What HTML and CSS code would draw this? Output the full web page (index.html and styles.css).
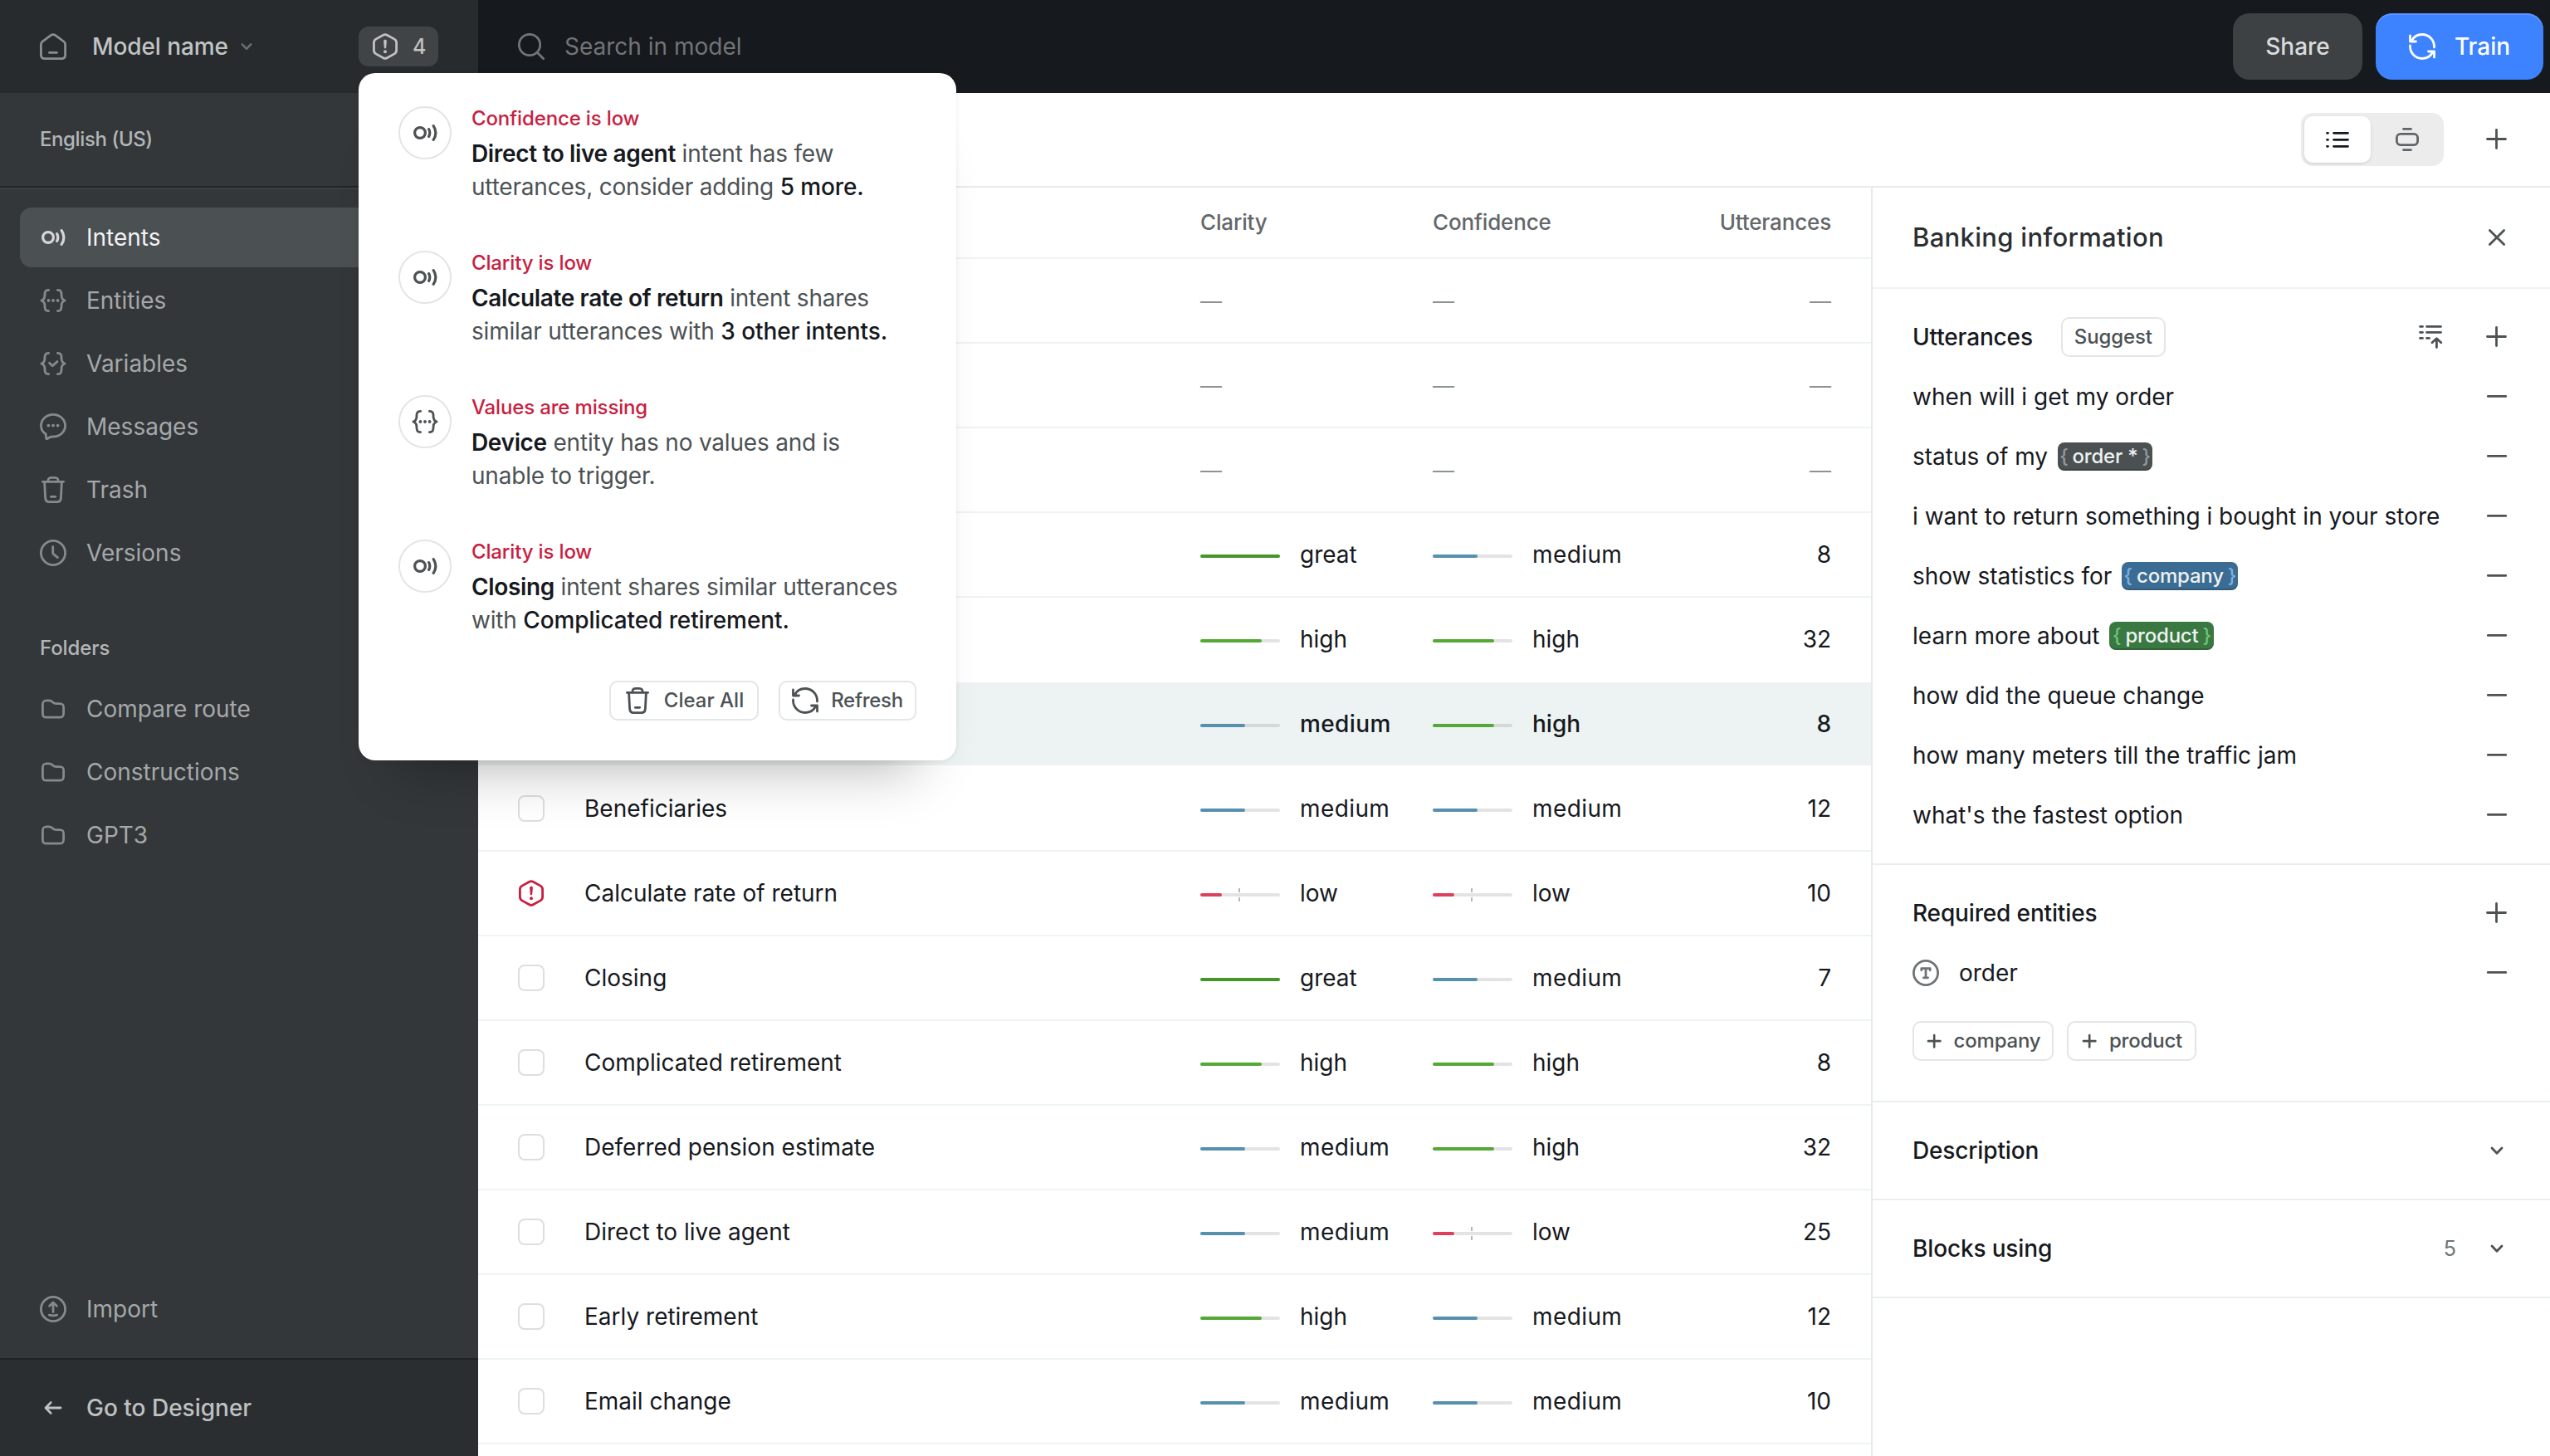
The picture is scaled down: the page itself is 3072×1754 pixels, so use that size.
FILE: index.html
```
<!DOCTYPE html>
<html lang="en">
<head>
  <meta charset="UTF-8">
  <meta name="viewport" content="width=device-width, initial-scale=1.0">
  <title>Model name</title>
  <link rel="stylesheet" href="styles.css">
</head>
<body>

  <!-- Icons -->
  <svg class="sprite" xmlns="http://www.w3.org/2000/svg">
    <symbol id="home" viewBox="0 0 32 32"><path d="M1.4 13.4c0-1.5.6-2.5 1.8-3.4l9.9-7.4c1.8-1.3 4-1.3 5.8 0l9.9 7.4c1.2.9 1.8 1.9 1.8 3.4V26c0 3-1.6 4.6-4.6 4.6H6C3 30.6 1.4 29 1.4 26zM11.5 23.4h9"/></symbol>
    <symbol id="alert" viewBox="0 0 32 32"><path d="M13.7 2.2c1.4-.8 3.2-.8 4.6 0l8.8 4.9c1.7 1 2.5 2.4 2.5 4.3v9.2c0 1.9-.8 3.3-2.5 4.3l-8.8 4.9c-1.4.8-3.2.8-4.6 0l-8.8-4.900c-1.7-1-2.5-2.4-2.5-4.3v-9.2c0-1.9.8-3.3 2.5-4.3z"/><path class="fill" d="M14.1 9.6c0-2.4 3.8-2.4 3.8 0l-.7 7.6c-.1 1.6-2.3 1.6-2.4 0z"/><circle class="fill" cx="16" cy="22.3" r="2"/></symbol>
    <symbol id="search" viewBox="0 0 32 32"><circle cx="14" cy="14" r="12.7"/><path d="M23.3 23.3l7.4 7.4"/></symbol>
    <symbol id="intent" viewBox="0 0 32 32"><g stroke-width="3.2"><circle cx="10" cy="16" r="6.4"/><path d="M20.6 11.600c1.600 2.900 1.600 5.900 0 8.800M26.200 7.600c3.400 5.300 3.400 11.500 0 16.800"/></g></symbol>
    <symbol id="entity" viewBox="0 0 32 32"><path d="M10.6 3.4c-4 0-4.700 2-4.700 6.600 0 3-.9 4.800-4 6 3.100 1.200 4 3 4 6 0 4.600.7 6.600 4.700 6.600M21.400 3.400c4 0 4.700 2 4.700 6.600 0 3 .9 4.800 4 6-3.100 1.200-4 3-4 6 0 4.600-.7 6.600-4.700 6.600"/><circle class="fill" cx="10.4" cy="16" r="1.9"/><circle class="fill" cx="16" cy="16" r="1.9"/><circle class="fill" cx="21.6" cy="16" r="1.9"/></symbol>
    <symbol id="variable" viewBox="0 0 32 32"><path d="M10.6 3.4c-4 0-4.700 2-4.700 6.600 0 3-.9 4.800-4 6 3.100 1.200 4 3 4 6 0 4.600.7 6.600 4.700 6.600M21.400 3.400c4 0 4.700 2 4.700 6.600 0 3 .9 4.800 4 6-3.100 1.200-4 3-4 6 0 4.600-.7 6.600-4.700 6.600M11.500 15.200l3.700 3.600 5.800-5.200"/></symbol>
    <symbol id="message" viewBox="0 0 32 32"><path d="M7.200 25C3.600 22.700 1.400 19 1.400 14.800 1.400 7.400 7.900 1.400 16 1.400s14.600 6 14.600 13.400S24.100 28 16 28c-1 0-2 0-3 .3l-4 2.100c-.9.400-1.500 0-1.500-.9z"/><circle class="fill" cx="10.4" cy="14.6" r="1.9"/><circle class="fill" cx="16" cy="14.6" r="1.9"/><circle class="fill" cx="21.6" cy="14.6" r="1.9"/></symbol>
    <symbol id="trash" viewBox="0 0 32 32"><path d="M3.4 6.4h25.2M9.8 6.4c0-3.600 1-5 4-5h4.400c3 0 4 1.400 4 5M5.600 6.400l1 19.200c.2 3.500 1.400 5 4.600 5h9.600c3.200 0 4.400-1.500 4.600-5l1-19.200M13.300 24.300h5.400"/></symbol>
    <symbol id="clock" viewBox="0 0 32 32"><circle cx="16" cy="16" r="14.6"/><path d="M15.7 8.600V16c0 .8.200 1.200.8 1.700l5 4"/></symbol>
    <symbol id="folder" viewBox="0 0 32 32"><path d="M3.4 11c0-4 1-5.200 5-5.200h2.400c2.400 0 3 .4 4.500 1.900 1.600 1.500 2.300 1.900 4.600 1.900h3.700c4 0 5 1.100 5 5v6.400c0 4-1 5.200-5 5.200H8.400c-4 0-5-1.200-5-5.200z"/></symbol>
    <symbol id="import" viewBox="0 0 32 32"><circle cx="16" cy="16" r="14.6"/><path d="M16 19.500V9M11.600 12.200L16 8l4.400 4.200M11.300 23.200c3 .9 6.400.9 9.400 0"/></symbol>
    <symbol id="arrow-left" viewBox="0 0 32 32"><path d="M25 16H7.500M13.200 9.600L7 16l6.200 6.400"/></symbol>
    <symbol id="refresh" viewBox="0 0 32 32"><path d="M3 9.800C5.300 4.800 10.300 1.500 16 1.500c8 0 14.500 6.500 14.500 14.500v1M1.500 3v7h7M29 22.200c-2.300 5-7.300 8.300-13 8.300C8 30.500 1.500 24 1.500 16v-1M30.500 29v-7h-7"/></symbol>
    <symbol id="chevron" viewBox="0 0 16 16"><path d="M2 5l6 6.200L14 5"/></symbol>
    <symbol id="list" viewBox="0 0 32 32"><path d="M3.500 8.300h1M11.500 8.300h17M3.500 16.300h1M11.500 16.300h17M3.500 24.300h1M11.500 24.300h17"/></symbol>
    <symbol id="board" viewBox="0 0 32 32"><rect x="3.4" y="9.4" width="25.2" height="13.2" rx="4.5"/><path d="M11.500 3.400h9M11.500 28.600h9"/></symbol>
    <symbol id="plus" viewBox="0 0 32 32"><path d="M15.500 4.500v22M4.500 15.500h22"/></symbol>
    <symbol id="minus" viewBox="0 0 32 32"><path d="M5.300 15.400h21.400"/></symbol>
    <symbol id="close" viewBox="0 0 32 32"><path d="M7.400 7.400l17.200 17.200M24.600 7.400L7.400 24.600"/></symbol>
    <symbol id="bulk" viewBox="0 0 32 32"><path d="M3.500 3.400h3M11.500 3.400h17M3.500 10.400h3M11.500 10.400h17M3.500 17.400h3M11.500 17.400h3M23.400 28.500V18M18 22.700l5.400-4.900 5.400 4.900"/></symbol>
    <symbol id="type" viewBox="0 0 32 32"><circle cx="16" cy="16" r="14.6"/><path d="M10.800 12.800V10.600h10.400v2.200M16 10.600v11.200M13.400 21.800h5.200"/></symbol>
  </svg>

  <div class="app">
    <!-- Sidebar -->
    <aside class="sidebar">
      <div class="sidebar-header">
        <svg class="icon home-icon"><use href="#home"/></svg>
        <span class="model-name">Model name</span>
        <svg class="model-chevron"><use href="#chevron"/></svg>

        <div class="alerts">
          <button class="alerts-button">
            <svg class="icon"><use href="#alert"/></svg>
            <span>4</span>
          </button>

          <!-- Notifications -->
          <div class="popover">
            <div class="notice">
              <span class="notice-icon"><svg class="icon"><use href="#intent"/></svg></span>
              <div>
                <h4>Confidence is low</h4>
                <p><b>Direct to live agent</b> intent has few<br>utterances, consider adding <em>5 more.</em></p>
              </div>
            </div>
            <div class="notice">
              <span class="notice-icon"><svg class="icon"><use href="#intent"/></svg></span>
              <div>
                <h4>Clarity is low</h4>
                <p><b>Calculate rate of return</b> intent shares<br>similar utterances with <em>3 other intents.</em></p>
              </div>
            </div>
            <div class="notice">
              <span class="notice-icon"><svg class="icon"><use href="#entity"/></svg></span>
              <div>
                <h4>Values are missing</h4>
                <p><b>Device</b> entity has no values and is<br>unable to trigger.</p>
              </div>
            </div>
            <div class="notice">
              <span class="notice-icon"><svg class="icon"><use href="#intent"/></svg></span>
              <div>
                <h4>Clarity is low</h4>
                <p><b>Closing</b> intent shares similar utterances<br>with <em>Complicated retirement.</em></p>
              </div>
            </div>
            <div class="popover-actions">
              <button class="small-button clear-button"><svg class="icon"><use href="#trash"/></svg><span>Clear All</span></button>
              <button class="small-button refresh-button"><svg class="icon"><use href="#refresh"/></svg><span>Refresh</span></button>
            </div>
          </div>
        </div>
      </div>

      <div class="language"><span>English (US)</span></div>

      <nav class="menu">
        <a class="menu-item active"><svg class="icon"><use href="#intent"/></svg><span>Intents</span></a>
        <a class="menu-item"><svg class="icon"><use href="#entity"/></svg><span>Entities</span></a>
        <a class="menu-item"><svg class="icon"><use href="#variable"/></svg><span>Variables</span></a>
        <a class="menu-item"><svg class="icon"><use href="#message"/></svg><span>Messages</span></a>
        <a class="menu-item"><svg class="icon"><use href="#trash"/></svg><span>Trash</span></a>
        <a class="menu-item"><svg class="icon"><use href="#clock"/></svg><span>Versions</span></a>
      </nav>

      <h3 class="menu-title">Folders</h3>
      <nav class="menu folders">
        <a class="menu-item"><svg class="icon"><use href="#folder"/></svg><span>Compare route</span></a>
        <a class="menu-item"><svg class="icon"><use href="#folder"/></svg><span>Constructions</span></a>
        <a class="menu-item"><svg class="icon"><use href="#folder"/></svg><span>GPT3</span></a>
      </nav>

      <a class="menu-item import"><svg class="icon"><use href="#import"/></svg><span>Import</span></a>
      <a class="sidebar-footer"><svg class="icon"><use href="#arrow-left"/></svg><span>Go to Designer</span></a>
    </aside>

    <div class="main">
      <!-- Top bar -->
      <header class="topbar">
        <svg class="icon"><use href="#search"/></svg>
        <span class="search-text">Search in model</span>
        <button class="share-button">Share</button>
        <button class="train-button"><svg class="icon"><use href="#refresh"/></svg><span>Train</span></button>
      </header>

      <div class="toolbar">
        <div class="toggle">
          <span class="toggle-item selected"><svg class="icon"><use href="#list"/></svg></span>
          <span class="toggle-item"><svg class="icon"><use href="#board"/></svg></span>
        </div>
        <svg class="icon"><use href="#plus"/></svg>
      </div>

      <div class="content">
        <!-- Intents table -->
        <section class="table">
          <div class="row head">
            <span></span><span></span><span>Clarity</span><span>Confidence</span><span class="count">Utterances</span>
          </div>
          <div class="row"><i class="checkbox"></i><span></span><span class="dash">—</span><span class="dash">—</span><span class="dash count">—</span></div>
          <div class="row"><i class="checkbox"></i><span></span><span class="dash">—</span><span class="dash">—</span><span class="dash count">—</span></div>
          <div class="row"><i class="checkbox"></i><span></span><span class="dash">—</span><span class="dash">—</span><span class="dash count">—</span></div>
          <div class="row"><i class="checkbox"></i><span></span><span class="level great"><i></i>great</span><span class="level medium"><i></i>medium</span><span class="count">8</span></div>
          <div class="row before-current"><i class="checkbox"></i><span></span><span class="level high"><i></i>high</span><span class="level high"><i></i>high</span><span class="count">32</span></div>
          <div class="row current"><i class="checkbox"></i><span></span><span class="level medium"><i></i>medium</span><span class="level high"><i></i>high</span><span class="count">8</span></div>
          <div class="row"><i class="checkbox"></i><span>Beneficiaries</span><span class="level medium"><i></i>medium</span><span class="level medium"><i></i>medium</span><span class="count">12</span></div>
          <div class="row"><svg class="icon warning"><use href="#alert"/></svg><span>Calculate rate of return</span><span class="level low"><i></i>low</span><span class="level low"><i></i>low</span><span class="count">10</span></div>
          <div class="row"><i class="checkbox"></i><span>Closing</span><span class="level great"><i></i>great</span><span class="level medium"><i></i>medium</span><span class="count">7</span></div>
          <div class="row"><i class="checkbox"></i><span>Complicated retirement</span><span class="level high"><i></i>high</span><span class="level high"><i></i>high</span><span class="count">8</span></div>
          <div class="row"><i class="checkbox"></i><span>Deferred pension estimate</span><span class="level medium"><i></i>medium</span><span class="level high"><i></i>high</span><span class="count">32</span></div>
          <div class="row"><i class="checkbox"></i><span>Direct to live agent</span><span class="level medium"><i></i>medium</span><span class="level low"><i></i>low</span><span class="count">25</span></div>
          <div class="row"><i class="checkbox"></i><span>Early retirement</span><span class="level high"><i></i>high</span><span class="level medium"><i></i>medium</span><span class="count">12</span></div>
          <div class="row"><i class="checkbox"></i><span>Email change</span><span class="level medium"><i></i>medium</span><span class="level medium"><i></i>medium</span><span class="count">10</span></div>
        </section>

        <!-- Details panel -->
        <section class="panel">
          <div class="panel-header">
            <h2>Banking information</h2>
            <svg class="icon"><use href="#close"/></svg>
          </div>

          <div class="panel-section utterances">
            <div class="line">
              <h3>Utterances</h3>
              <button class="small-button suggest-button">Suggest</button>
              <svg class="icon bulk-icon"><use href="#bulk"/></svg>
              <svg class="icon"><use href="#plus"/></svg>
            </div>
            <div class="line"><span>when will i get my order</span><svg class="icon"><use href="#minus"/></svg></div>
            <div class="line"><span>status of my</span><span class="tag order"><i>{</i>order *<i>}</i></span><svg class="icon"><use href="#minus"/></svg></div>
            <div class="line"><span>i want to return something i bought in your store</span><svg class="icon"><use href="#minus"/></svg></div>
            <div class="line"><span>show statistics for</span><span class="tag company"><i>{</i>company<i>}</i></span><svg class="icon"><use href="#minus"/></svg></div>
            <div class="line"><span>learn more about</span><span class="tag product"><i>{</i>product<i>}</i></span><svg class="icon"><use href="#minus"/></svg></div>
            <div class="line"><span>how did the queue change</span><svg class="icon"><use href="#minus"/></svg></div>
            <div class="line"><span>how many meters till the traffic jam</span><svg class="icon"><use href="#minus"/></svg></div>
            <div class="line"><span>what's the fastest option</span><svg class="icon"><use href="#minus"/></svg></div>
          </div>

          <div class="panel-section entities">
            <div class="line"><h3>Required entities</h3><svg class="icon"><use href="#plus"/></svg></div>
            <div class="line"><svg class="icon type-icon"><use href="#type"/></svg><span>order</span><svg class="icon"><use href="#minus"/></svg></div>
            <div class="suggested">
              <button class="small-button add-company"><svg class="add-icon"><use href="#plus"/></svg><span>company</span></button>
              <button class="small-button add-product"><svg class="add-icon"><use href="#plus"/></svg><span>product</span></button>
            </div>
          </div>

          <div class="panel-section collapsed">
            <h3>Description</h3>
            <svg class="chevron"><use href="#chevron"/></svg>
          </div>
          <div class="panel-section collapsed">
            <h3>Blocks using</h3>
            <span class="blocks-count">5</span>
            <svg class="chevron"><use href="#chevron"/></svg>
          </div>
        </section>
      </div>
    </div>
  </div>

</body>
</html>
```

FILE: styles.css
```
* {
  margin: 0;
  padding: 0;
  box-sizing: border-box;
}

body {
  font-family: Inter, "Liberation Sans", sans-serif;
  font-size: 28px;
  line-height: 40px;
  color: #16191e;
  background-color: #fff;
  overflow: hidden;
}

button {
  font: inherit;
  border: none;
  cursor: pointer;
}

h2, h3, h4 {
  font-weight: 500;
}

i, em {
  font-style: normal;
}

.sprite {
  display: none;
}

svg {
  fill: none;
  stroke: currentColor;
  stroke-width: 2.8;
  stroke-linecap: round;
  stroke-linejoin: round;
  flex-shrink: 0;
}

.fill {
  fill: currentColor;
  stroke: none;
}

.icon {
  width: 32px;
  height: 32px;
}

.app {
  display: flex;
  height: 1754px;
}

/* Sidebar */
.sidebar {
  width: 576px;
  display: flex;
  flex-direction: column;
  background-color: #33373a;
  color: #a5a8a9;
  z-index: 2;
}

.sidebar-header {
  height: 112px;
  display: flex;
  align-items: center;
  padding: 0 48px;
  background-color: #272b2e;
}

.home-icon {
  color: #8b8e90;
}

.model-name {
  margin-left: 31px;
  font-weight: 500;
  letter-spacing: -0.1px;
  color: #c1c4c4;
}

.model-chevron {
  width: 14px;
  height: 14px;
  margin-left: 15px;
  color: #6b6f71;
}

.alerts {
  position: relative;
  margin-left: auto;
}

.alerts-button {
  width: 96px;
  height: 48px;
  display: flex;
  align-items: center;
  gap: 17px;
  padding-left: 16px;
  border-radius: 12px;
  background-color: #404447;
  color: #bfc1c2;
  font-size: 25px;
  font-weight: 500;
}

.language {
  height: 116px;
  padding: 36px 48px 0;
  border-bottom: 2px solid #3b3f42;
  box-shadow: inset 0 -2px 0 #212528;
  font-size: 24px;
  font-weight: 500;
  letter-spacing: -0.4px;
  color: #b3b6b7;
}

.menu {
  display: flex;
  flex-direction: column;
  gap: 4px;
  padding: 22px 24px 0;
}

.menu-item {
  height: 72px;
  display: flex;
  align-items: center;
  gap: 24px;
  padding-left: 24px;
  border-radius: 14px;
}

.menu-item .icon {
  color: #868a8b;
}

.menu-item.active {
  background-color: #4b5053;
  color: #f2f3f3;
}

.menu-item.active .icon {
  color: #d5d7d7;
}

.menu-title {
  margin-top: 59px;
  padding-left: 48px;
  font-size: 24px;
  letter-spacing: -0.1px;
  color: #b3b6b7;
}

.folders {
  padding-top: 17px;
}

.import {
  margin: auto 24px 23px;
}

.sidebar-footer {
  height: 118px;
  display: flex;
  align-items: center;
  gap: 24px;
  padding-left: 48px;
  border-top: 2px solid #1f2326;
  background-color: #2a2e31;
  font-weight: 500;
  color: #bfc1c2;
}

/* Notifications popover */
.popover {
  position: absolute;
  top: 56px;
  left: 0;
  width: 720px;
  height: 828px;
  padding: 40px 48px 48px;
  border-radius: 20px;
  background-color: #fff;
  box-shadow: 0 0 6px rgba(0, 0, 0, 0.08), 0 56px 64px -48px rgba(0, 0, 0, 0.3);
  color: #4c5254;
}

.notice {
  height: 174px;
  display: flex;
  gap: 24px;
}

.notice-icon {
  width: 64px;
  height: 64px;
  display: flex;
  align-items: center;
  justify-content: center;
  border: 2px solid #e3e5e5;
  border-radius: 50%;
}

.notice h4 {
  height: 36px;
  margin-top: -5px;
  font-size: 24px;
  letter-spacing: -0.15px;
  color: #c8203f;
}

.notice p {
  margin-top: 6px;
  letter-spacing: -0.2px;
  white-space: nowrap;
}

.notice b {
  font-weight: 600;
  letter-spacing: -0.35px;
  color: #16191e;
}

.notice em {
  font-weight: 500;
  letter-spacing: -0.1px;
  color: #16191e;
}

.popover-actions {
  display: flex;
  justify-content: flex-end;
  gap: 24px;
  margin-top: -4px;
}

.small-button {
  height: 48px;
  display: flex;
  align-items: center;
  justify-content: center;
  border: 2px solid #e2e6e5;
  border-radius: 10px;
  background-color: #fff;
  font-size: 24px;
  font-weight: 500;
  color: #4c5254;
}

.clear-button {
  width: 180px;
  gap: 16px;
}

.refresh-button {
  width: 166px;
  gap: 15px;
  letter-spacing: -0.3px;
}

/* Top bar */
.main {
  flex: 1;
  display: flex;
  flex-direction: column;
}

.topbar {
  height: 112px;
  display: flex;
  align-items: center;
  padding: 0 8px 0 48px;
  background-color: #16191e;
  color: #727577;
}

.search-text {
  flex: 1;
  margin-left: 24px;
}

.share-button,
.train-button {
  height: 80px;
  display: flex;
  align-items: center;
  justify-content: center;
  border-radius: 20px;
  font-weight: 500;
}

.share-button {
  width: 156px;
  margin-right: 16px;
  background-color: #3d4144;
  color: #d9dbdb;
}

.train-button {
  width: 202px;
  gap: 23px;
  background-color: #3d82ff;
  box-shadow: inset 0 2px 0 #5a93fc;
  color: #fff;
}

.toolbar {
  height: 114px;
  display: flex;
  align-items: center;
  justify-content: flex-end;
  gap: 48px;
  padding-right: 48px;
  border-bottom: 2px solid #e6ebeb;
  color: #4c5254;
}

.toggle {
  width: 172px;
  height: 64px;
  display: flex;
  gap: 4px;
  padding: 4px;
  border-radius: 14px;
  background-color: #ececec;
}

.toggle-item {
  width: 80px;
  height: 56px;
  display: flex;
  align-items: center;
  justify-content: center;
  border-radius: 10px;
  color: #5f6567;
}

.toggle-item.selected {
  background-color: #fff;
  box-shadow: 0 1px 3px rgba(0, 0, 0, 0.14);
  color: #16191e;
}

/* Table */
.content {
  flex: 1;
  display: flex;
  min-height: 0;
}

.table {
  width: 1680px;
  border-right: 2px solid #e6eaea;
  overflow: hidden;
}

.row {
  height: 102px;
  display: grid;
  grid-template-columns: 80px 742px 280px 280px 1fr;
  align-items: center;
  padding: 0 48px;
  border-bottom: 2px solid #eef3f3;
}

.row.head {
  height: 86px;
  font-size: 26px;
  font-weight: 500;
  letter-spacing: -0.15px;
  color: #626769;
}

.row.before-current {
  border-color: #fff;
}

.row.current {
  background-color: #edf3f3;
  border-color: #fff;
  font-weight: 500;
}

.count {
  text-align: right;
}

.checkbox {
  width: 32px;
  height: 32px;
  border: 2px solid #dcdfe0;
  border-radius: 8px;
}

.warning {
  color: #c8203f;
}

.dash {
  padding-top: 1px;
  font-size: 26px;
  color: #8d9293;
}

.level {
  display: flex;
  align-items: center;
  gap: 24px;
}

.level i {
  position: relative;
  width: 96px;
  height: 4px;
  margin-top: 3px;
  border-radius: 2px;
  background-color: rgba(0, 0, 0, 0.11);
}

.level i::before {
  content: "";
  display: block;
  height: 4px;
  border-radius: 2px;
}

.great i::before {
  width: 96px;
  background-color: #45962a;
}

.high i::before {
  width: 74px;
  background-color: #54a836;
}

.medium {
  letter-spacing: 0.4px;
}

.medium i::before {
  width: 54px;
  background-color: #5590ae;
}

.low i::before {
  width: 26px;
  background-color: #de3f5c;
}

/* Threshold mark above and below the bar */
.low i::after {
  content: "";
  position: absolute;
  top: -6px;
  left: 46px;
  width: 2px;
  height: 16px;
  background: linear-gradient(#b5b8b9 5px, transparent 5px, transparent 11px, #b5b8b9 11px);
}

/* Details panel */
.panel {
  flex: 1;
}

.panel-header {
  height: 122px;
  display: flex;
  align-items: center;
  justify-content: space-between;
  padding: 0 48px;
  border-bottom: 2px solid #eef3f3;
  color: #4c5254;
}

.panel-header h2 {
  font-size: 31px;
  letter-spacing: 0.3px;
  color: #2b2f32;
}

.panel h3 {
  font-size: 28px;
  letter-spacing: -0.15px;
}

.panel-section {
  padding: 0 48px;
  border-bottom: 2px solid #e9efee;
}

.utterances {
  height: 694px;
  padding-top: 22px;
}

.line {
  height: 72px;
  display: flex;
  align-items: center;
}

.line .icon {
  color: #4c5254;
}

.line .icon:last-child {
  margin-left: auto;
}

.suggest-button {
  width: 126px;
  margin-left: 34px;
  letter-spacing: -0.1px;
}

.line .bulk-icon {
  margin: 0 48px 0 auto;
}

.line .bulk-icon + .icon {
  margin-left: 0;
}

.tag {
  height: 34px;
  display: flex;
  align-items: center;
  justify-content: center;
  gap: 5px;
  margin-left: 12px;
  border-radius: 8px;
  box-shadow: inset 0 -2px 0 rgba(0, 0, 0, 0.16);
  font-size: 24px;
  line-height: 30px;
  font-weight: 500;
  letter-spacing: -0.2px;
  color: #eef1f1;
}

.tag.order {
  width: 114px;
  background-color: #4b5053;
}

.tag.company {
  width: 140px;
  background-color: #3b6c94;
}

.tag.product {
  width: 126px;
  background-color: #3a7842;
}

.order i {
  color: #93989a;
}

.company i {
  color: #7eb0de;
}

.product i {
  color: #6fc27c;
}

.entities {
  height: 286px;
  padding-top: 22px;
}

.line .type-icon {
  margin-right: 24px;
  color: #6e7476;
}

.suggested {
  display: flex;
  gap: 16px;
  margin-top: 22px;
}

.add-company,
.add-product {
  gap: 13px;
  letter-spacing: -0.2px;
}

.add-company {
  width: 170px;
}

.add-product {
  width: 156px;
}

.add-icon {
  width: 21px;
  height: 21px;
  stroke-width: 4;
}

.collapsed {
  height: 118px;
  display: flex;
  align-items: center;
  padding-right: 56px;
}

.chevron {
  width: 16px;
  height: 16px;
  margin-left: auto;
  color: #4c5254;
}

.blocks-count {
  margin-left: auto;
  font-size: 25px;
  color: #6e7476;
}

.blocks-count + .chevron {
  margin-left: 41px;
}
```
